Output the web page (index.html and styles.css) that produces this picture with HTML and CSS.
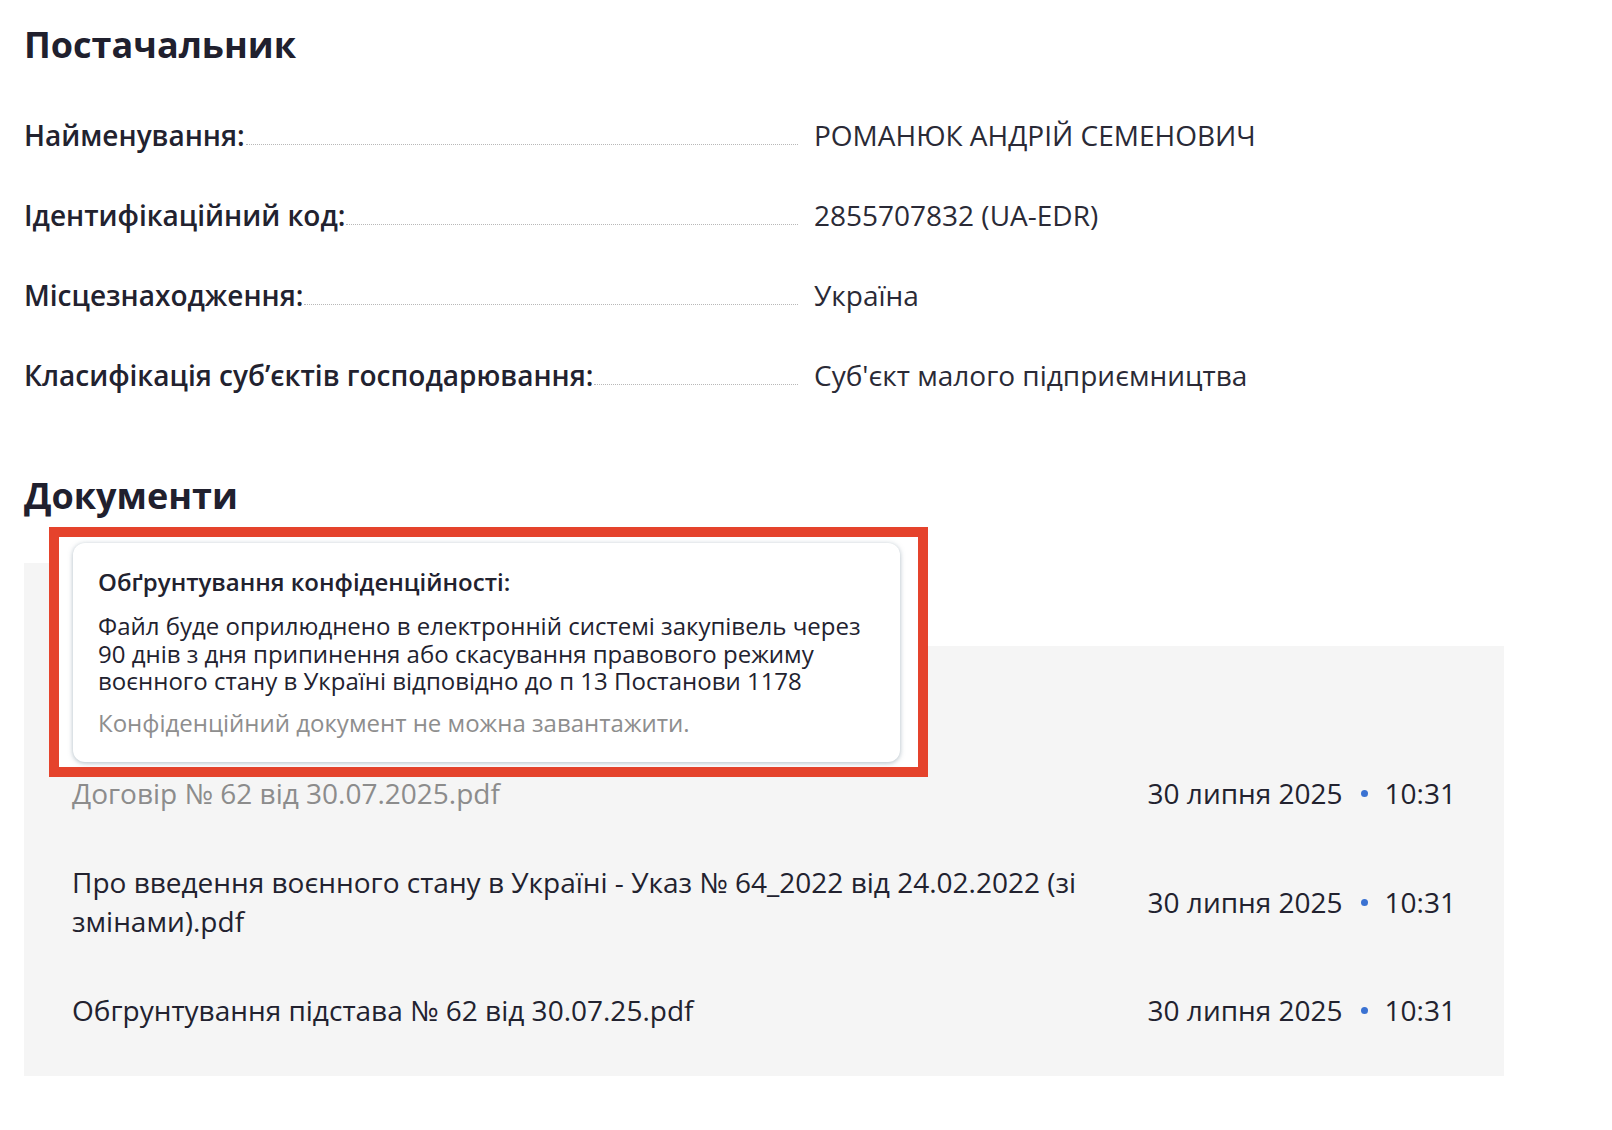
FILE: index.html
```html
<!DOCTYPE html>
<html lang="uk">
<head>
<meta charset="utf-8">
<title>Постачальник</title>
<link rel="stylesheet" href="styles.css">
</head>
<body>
<main class="page">
  <section class="supplier">
    <h2 class="title">Постачальник</h2>
    <dl class="props">
      <div class="prop">
        <dt class="prop-label"><span>Найменування:</span><span class="leader"></span></dt>
        <dd class="prop-value">РОМАНЮК АНДРІЙ СЕМЕНОВИЧ</dd>
      </div>
      <div class="prop">
        <dt class="prop-label"><span>Ідентифікаційний код:</span><span class="leader"></span></dt>
        <dd class="prop-value">2855707832 (UA-EDR)</dd>
      </div>
      <div class="prop">
        <dt class="prop-label"><span>Місцезнаходження:</span><span class="leader"></span></dt>
        <dd class="prop-value">Україна</dd>
      </div>
      <div class="prop">
        <dt class="prop-label"><span>Класифікація суб’єктів господарювання:</span><span class="leader"></span></dt>
        <dd class="prop-value">Суб'єкт малого підприємництва</dd>
      </div>
    </dl>
  </section>

  <section class="documents">
    <h2 class="title docs-title">Документи</h2>
    <div class="docs">
      <div class="tip-frame">
        <div class="tip">
          <div class="tip-title">Обґрунтування конфіденційності:</div>
          <p class="tip-text">Файл буде оприлюднено в електронній системі закупівель через 90 днів з дня припинення або скасування правового режиму воєнного стану в Україні відповідно до п 13 Постанови 1178</p>
          <p class="tip-note">Конфіденційний документ не можна завантажити.</p>
        </div>
      </div>
      <div class="doc">
        <div class="doc-name doc-name-muted">Договір № 62 від 30.07.2025.pdf</div>
        <div class="doc-date"><span>30 липня 2025</span><span class="dot"></span><span>10:31</span></div>
      </div>
      <div class="doc">
        <div class="doc-name">Про введення воєнного стану в Україні - Указ № 64_2022 від 24.02.2022 (зі змінами).pdf</div>
        <div class="doc-date"><span>30 липня 2025</span><span class="dot"></span><span>10:31</span></div>
      </div>
      <div class="doc">
        <div class="doc-name">Обгрунтування підстава № 62 від 30.07.25.pdf</div>
        <div class="doc-date"><span>30 липня 2025</span><span class="dot"></span><span>10:31</span></div>
      </div>
    </div>
  </section>
</main>
</body>
</html>
```

FILE: styles.css
```css
html, body {
  margin: 0;
  padding: 0;
  background: #ffffff;
}

body {
  font-family: "Open Sans", "Noto Sans", sans-serif;
  color: #22222f;
}

.page {
  padding: 23px 0 40px 24px;
  width: 1480px;
}

.title {
  margin: 0;
  font-size: 36px;
  line-height: 44px;
  font-weight: 700;
  color: #20202e;
}

.props {
  margin: 48px 0 0;
  display: flex;
  flex-direction: column;
  gap: 40px;
}

.prop {
  display: grid;
  grid-template-columns: 774px 1fr;
  column-gap: 16px;
  font-size: 28px;
  line-height: 40px;
}

.prop-label {
  display: flex;
  margin: 0;
  font-weight: 600;
  white-space: nowrap;
}

.leader {
  flex: 1;
  border-bottom: 1px dotted #b8b8b8;
  margin: 0 0 10px 1px;
}

.prop-value {
  margin: 0;
  color: #2a2a36;
}

.docs-title {
  margin-top: 79px;
}

.docs {
  position: relative;
  margin-top: 128px;
  background: #f5f5f5;
  padding: 103px 48px 21px 48px;
}

.docs::before {
  content: "";
  position: absolute;
  left: 0;
  top: -83px;
  width: 25px;
  height: 83px;
  background: #f5f5f5;
}

.tip-frame {
  position: absolute;
  left: 25px;
  top: -119px;
  width: 879px;
  height: 250px;
  box-sizing: border-box;
  border: 10px solid #e5432c;
  background: #ffffff;
  padding: 6px 18px 5px 14px;
  z-index: 2;
}

.tip {
  height: 100%;
  box-sizing: border-box;
  background: #ffffff;
  border-radius: 12px;
  box-shadow: 0 1px 5px rgba(105, 130, 145, 0.55);
  padding: 25px 20px 0 25px;
}

.tip-title {
  font-size: 24px;
  line-height: 28px;
  font-weight: 600;
  color: #22222f;
}

.tip-text {
  margin: 16px 0 0;
  font-size: 24px;
  line-height: 27.5px;
  color: #22222f;
}

.tip-note {
  margin: 14px 0 0;
  font-size: 24px;
  line-height: 27.5px;
  color: #8e8e8e;
}

.doc {
  display: flex;
  align-items: center;
  justify-content: space-between;
  gap: 40px;
  padding: 25px 0;
  font-size: 28px;
  line-height: 39px;
  color: #22222f;
}

.doc-name {
  flex: 1;
}

.doc-name-muted {
  color: #8c8c8c;
}

.doc-date {
  display: flex;
  align-items: center;
  white-space: nowrap;
}

.dot {
  width: 7px;
  height: 7px;
  border-radius: 50%;
  background: #3a72d2;
  margin: 0 17px 0 18px;
}
```
